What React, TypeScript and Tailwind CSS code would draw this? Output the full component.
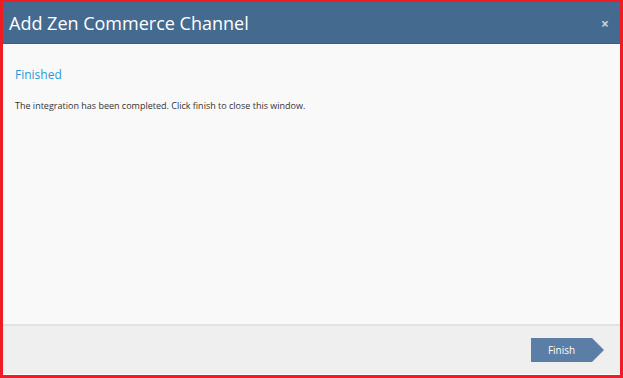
export default function App() {
  return (
    <div
      className="w-[623px] h-[378px] border-t-[2px] border-l-[3px] border-r-[3px] border-b-[3px] border-[#ee1c25] bg-white flex flex-col overflow-hidden"
      style={{ fontFamily: '"Open Sans", "Noto Sans", sans-serif' }}
    >
      <div className="h-[42px] shrink-0 bg-[#456a8f] border-b border-[#3a5c7e] flex items-center justify-between pl-[6px] pr-[11px]">
        <h1 className="text-[18px] text-white leading-none">Add Zen Commerce Channel</h1>
        <span className="text-[14px] font-bold text-[#c9d1da] leading-none mt-[2px]">×</span>
      </div>
      <div className="flex-1 bg-[#f9f9f9] pl-[12px] pt-[25px]">
        <h2 className="text-[12px] text-[#2a9ad6] leading-none">Finished</h2>
        <p className="text-[9px] text-[#333] mt-[20px] leading-none">
          The integration has been completed. Click finish to close this window.
        </p>
      </div>
      <div className="h-[2px] bg-[#e2e2e2] shrink-0" />
      <div className="h-[49px] shrink-0 bg-[#efefef] border-b border-white flex items-center justify-end pr-[16px]">
        <button className="relative h-[24px] w-[61px] bg-[#5a7ea5] text-white text-[10px] flex items-center justify-center mr-[12px]">
          Finish
          <span className="absolute left-full top-0 w-0 h-0 border-t-[12px] border-b-[12px] border-l-[12px] border-t-transparent border-b-transparent border-l-[#5a7ea5]" />
        </button>
      </div>
    </div>
  );
}
